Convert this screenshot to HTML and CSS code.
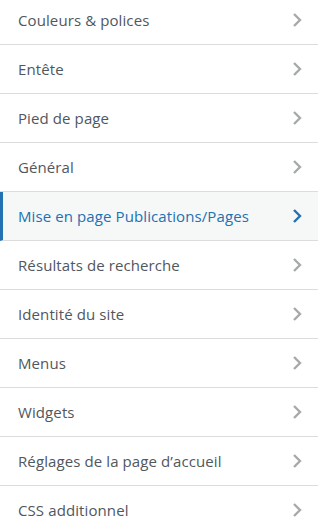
FILE: index.html
```html
<!DOCTYPE html>
<html lang="fr">
<head>
<meta charset="utf-8">
<link rel="stylesheet" href="styles.css">
</head>
<body>
<ul class="sections">
  <li class="section"><span class="title">Couleurs &amp; polices</span><svg class="chev" viewBox="0 0 10 16"><path d="M2 2 L8 8 L2 14"/></svg></li>
  <li class="section"><span class="title">Entête</span><svg class="chev" viewBox="0 0 10 16"><path d="M2 2 L8 8 L2 14"/></svg></li>
  <li class="section"><span class="title">Pied de page</span><svg class="chev" viewBox="0 0 10 16"><path d="M2 2 L8 8 L2 14"/></svg></li>
  <li class="section"><span class="title">Général</span><svg class="chev" viewBox="0 0 10 16"><path d="M2 2 L8 8 L2 14"/></svg></li>
  <li class="section active"><span class="title">Mise en page Publications/Pages</span><svg class="chev" viewBox="0 0 10 16"><path d="M2 2 L8 8 L2 14"/></svg></li>
  <li class="section"><span class="title">Résultats de recherche</span><svg class="chev" viewBox="0 0 10 16"><path d="M2 2 L8 8 L2 14"/></svg></li>
  <li class="section"><span class="title">Identité du site</span><svg class="chev" viewBox="0 0 10 16"><path d="M2 2 L8 8 L2 14"/></svg></li>
  <li class="section"><span class="title">Menus</span><svg class="chev" viewBox="0 0 10 16"><path d="M2 2 L8 8 L2 14"/></svg></li>
  <li class="section"><span class="title">Widgets</span><svg class="chev" viewBox="0 0 10 16"><path d="M2 2 L8 8 L2 14"/></svg></li>
  <li class="section"><span class="title">Réglages de la page d’accueil</span><svg class="chev" viewBox="0 0 10 16"><path d="M2 2 L8 8 L2 14"/></svg></li>
  <li class="section"><span class="title">CSS additionnel</span><svg class="chev" viewBox="0 0 10 16"><path d="M2 2 L8 8 L2 14"/></svg></li>
</ul>
</body>
</html>
```
FILE: styles.css
```css
html, body {
  margin: 0;
  padding: 0;
  background: #ffffff;
}
.sections {
  list-style: none;
  margin: -4px 0 0 0;
  padding: 0;
  width: 318px;
  font-family: "Open Sans", "Noto Sans", sans-serif;
  font-size: 15px;
}
.section {
  display: flex;
  align-items: center;
  justify-content: space-between;
  box-sizing: border-box;
  height: 49px;
  padding: 0 16px 0 18px;
  border-bottom: 1px solid #dcdcde;
  color: #50575e;
  font-weight: 500;
  letter-spacing: 0.1px;
}
.title {
  white-space: nowrap;
}
.chev {
  width: 10px;
  height: 16px;
  flex: none;
}
.chev path {
  fill: none;
  stroke: #a7aaad;
  stroke-width: 2.4;
}
.section.active {
  background: #f6f7f7;
  color: #2271b1;
  border-left: 3px solid #2271b1;
  padding-left: 15px;
}
.section.active .chev path {
  stroke: #2271b1;
}
```
